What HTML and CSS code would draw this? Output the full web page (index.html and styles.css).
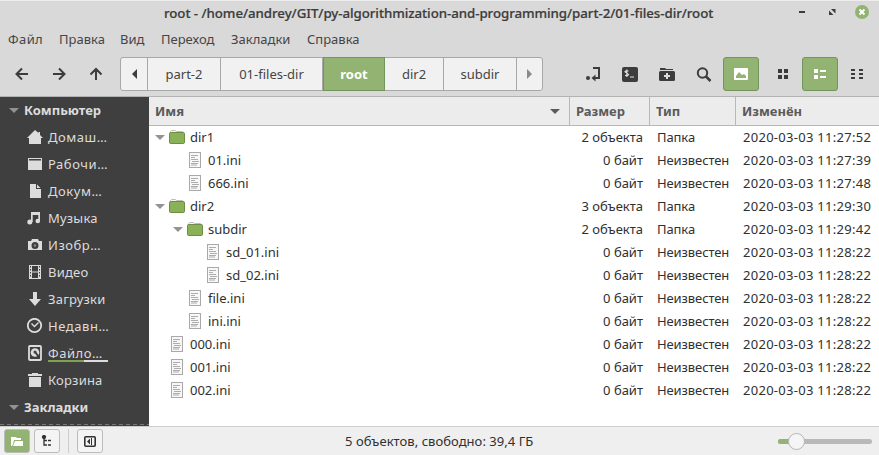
FILE: index.html
```html
<!DOCTYPE html>
<html lang="ru">
<head>
<meta charset="utf-8">
<title>root</title>
<link rel="stylesheet" href="styles.css">
</head>
<body>
<svg width="0" height="0" class="defs">
  <symbol id="folder" viewBox="0 0 16 15"><path d="M1.5 4V1.5L2.5.5h4l1 1h6l1 1V5" fill="#f6f6f6" stroke="#bdbdbd"/><rect x=".5" y="2.5" width="15" height="11" rx="1.200" fill="#8bb158" stroke="#6d8c44"/></symbol>
  <symbol id="file" viewBox="0 0 12 16"><rect x=".5" y=".5" width="11" height="15" fill="#f7f7f7" stroke="#a9a9a9"/><path d="M2 3.500h7M2 5.500h4M2 7.500h7M3 9.500h7M2 11.500h7M2 13h6" stroke="#adadad"/></symbol>
  <symbol id="tri" viewBox="0 0 10 5"><path d="M0 0h10L5 5z" fill="currentColor"/></symbol>
</svg>
<div class="window">
  <header class="titlebar">
    <div class="title">root - /home/andrey/GIT/py-algorithmization-and-programming/part-2/01-files-dir/root</div>
    <svg class="controls" width="75" height="16" viewBox="0 0 75 16"><path d="M2 8h6" stroke="#3c3c3c" stroke-width="2"/><path d="M34 5h4.500v4.500zM32 6.500v4.500h4.500z" fill="#3c3c3c"/><circle cx="65" cy="8" r="7" fill="#92b372"/><path d="M62.500 5.500l5 5m0-5l-5 5" stroke="#fff" stroke-width="1.800"/></svg>
  </header>
  <nav class="menu"><span class="m1">Файл</span><span class="m2">Правка</span><span class="m3">Вид</span><span class="m4">Переход</span><span class="m5">Закладки</span><span class="m6">Справка</span></nav>
  <div class="toolbar">
    <svg class="nav" width="90" height="14" viewBox="0 0 90 14" fill="none" stroke="#3c3c3c" stroke-width="2"><path d="M13 7H2M7 1.500L1.500 7 7 12.500M38 7h11M44 1.500L49.500 7 44 12.500M81 13V2M75.500 7.500L81 2l5.500 5.500"/></svg>
    <div class="path">
      <span class="p1"><svg width="5" height="10"><path d="M5 0v10L0 5z" fill="#3c3c3c"/></svg></span><span class="p2">part-2</span><span class="p3">01-files-dir</span><span class="p4 on">root</span><span class="p5">dir2</span><span class="p6">subdir</span><span class="p7"><svg width="5" height="10"><path d="M0 0v10l5-5z" fill="#8a8a8a"/></svg></span>
    </div>
    <div class="tools">
      <span class="tool"><svg width="16" height="16" fill="none" stroke="#3c3c3c" stroke-width="2"><circle cx="3" cy="12" r="2" fill="#3c3c3c" stroke="none"/><path d="M8 2h6v10H9"/><path d="M10.500 8.500v7L6.500 12z" fill="#3c3c3c" stroke="none"/></svg></span>
      <span class="tool"><svg width="16" height="16"><rect y="1" width="16" height="15" rx="2" fill="#3c3c3c"/><path d="M6.500 5H3.800L3 5.800 6.500 8.500 5.700 9.500H3M4.800 3.500v7.500M8 11h4" fill="none" stroke="#e0e0e0" stroke-width="1.200"/></svg></span>
      <span class="tool"><svg width="16" height="16"><path d="M1 4V2h5l1 1h7v1" fill="#3c3c3c"/><rect y="5" width="16" height="10" rx="1.500" fill="#3c3c3c"/><path d="M8 7v6M5 10h6" stroke="#ddd" stroke-width="2"/></svg></span>
      <span class="tool"><svg width="16" height="16" fill="none" stroke="#3c3c3c"><circle cx="6.500" cy="7" r="4.700" stroke-width="2"/><path d="M10 10.500l4.500 4.500" stroke-width="2.500"/></svg></span>
      <span class="tool on t5"><svg width="16" height="16"><rect x="1" y="2" width="14" height="12" rx="1" fill="#fff"/><path d="M3 12V10l3-4 3 3 2-1 2 2v2z" fill="#92b372"/></svg></span>
      <span class="tool t6"><svg width="16" height="16" fill="#3c3c3c"><path d="M3 3h4v4H3zM9 3h4v4H9zM3 9h4v4H3zM9 9h4v4H9z"/></svg></span>
      <span class="tool on t7"><svg width="16" height="16" fill="#fff"><path d="M2 3h4v4H2zM8 4h6v2H8zM2 9h4v4H2zM8 10h6v2H8z"/></svg></span>
      <span class="tool t8"><svg width="16" height="16" fill="#3c3c3c"><path d="M2 3h4v2H2zM10 3h4v2h-4zM2 7h4v2H2zM10 7h4v2h-4zM2 11h4v2H2zM10 11h4v2h-4z"/></svg></span>
    </div>
  </div>
  <main class="main">
    <aside class="side">
      <div class="group"><svg width="10" height="5"><use href="#tri"/></svg><span>Компьютер</span></div>
      <div class="place cut"><svg width="16" height="16"><path d="M8 1l3.500 3V3H13v3l3 3h-2v6H2V9H0z"/></svg><span>Домаш…</span></div>
      <div class="place cut"><svg width="16" height="16"><path d="M1 2h14v1H1zM1 4.500h14V14H1z"/><path d="M1 2h1v3H1zM14 2h1v3h-1z"/></svg><span>Рабочи…</span></div>
      <div class="place cut"><svg width="16" height="16"><path d="M3 1h6v5h5v9H3zM10 1.500L13.500 5H10z"/></svg><span>Докум…</span></div>
      <div class="place"><svg width="16" height="16"><path d="M4 2h9v9h-1.700V5H5.700v7H4z"/><circle cx="2.800" cy="12" r="2.500"/><circle cx="10.800" cy="11" r="2.300"/></svg><span>Музыка</span></div>
      <div class="place cut"><svg width="16" height="16"><path fill-rule="evenodd" d="M5 2h6l1 2h3v9H1V4h3zM8 5a3.500 3.500 0 100 7 3.500 3.500 0 000-7z"/><circle cx="8" cy="8.500" r="1.200" fill="#8a8a8a"/></svg><span>Изобр…</span></div>
      <div class="place"><svg width="16" height="16"><path fill-rule="evenodd" d="M2 1h12v14H2zM5 2v5.500h6V2zM5 8.500V14h6V8.500z"/><path d="M3.500 2v12M12.500 2v12" stroke="#3f3f3f" stroke-dasharray="1.500 1.500"/></svg><span>Видео</span></div>
      <div class="place"><svg width="16" height="16"><path d="M6 1h4v7h4l-6 7-6-7h4z"/></svg><span>Загрузки</span></div>
      <div class="place cut"><svg width="16" height="16"><circle cx="7.500" cy="7.500" r="6.700" fill="none" stroke="#dcdcdc" stroke-width="1.800"/><path d="M4.500 5.500l3 3 4-4" fill="none" stroke="#dcdcdc" stroke-width="1.400"/></svg><span>Недавн…</span></div>
      <div class="place cut"><svg width="16" height="16"><rect x="2" y="1" width="12" height="14" rx="1" fill="none" stroke="#dcdcdc" stroke-width="1.800"/><circle cx="8" cy="7.500" r="4.300"/><path d="M8 7l4 5" stroke="#3f3f3f" stroke-width="2"/><circle cx="8" cy="7" r="1.500" fill="#3f3f3f"/></svg><span>Файло…</span><i class="usage"></i></div>
      <div class="place"><svg width="16" height="16"><path d="M1 2h4V1h6v1h4v2H1zM2 5h12v10H2z"/></svg><span>Корзина</span></div>
      <div class="group"><svg width="10" height="5"><use href="#tri"/></svg><span>Закладки</span></div>
      <div class="more"></div>
    </aside>
    <section class="list">
      <div class="row head"><span class="name"><b>Имя</b><svg width="10" height="5"><use href="#tri"/></svg></span><span><b>Размер</b></span><span><b>Тип</b></span><span><b>Изменён</b></span></div>
      <div class="row"><span class="name"><svg class="exp" width="10" height="5"><use href="#tri"/></svg><svg class="fo" width="16" height="15"><use href="#folder"/></svg>dir1</span><span class="size">2 объекта</span><span class="type">Папка</span><span class="date">2020-03-03 11:27:52</span></div>
      <div class="row"><span class="name l1"><svg class="fi" width="12" height="16"><use href="#file"/></svg>01.ini</span><span class="size">0 байт</span><span class="type">Неизвестен</span><span class="date">2020-03-03 11:27:39</span></div>
      <div class="row"><span class="name l1"><svg class="fi" width="12" height="16"><use href="#file"/></svg>666.ini</span><span class="size">0 байт</span><span class="type">Неизвестен</span><span class="date">2020-03-03 11:27:48</span></div>
      <div class="row"><span class="name"><svg class="exp" width="10" height="5"><use href="#tri"/></svg><svg class="fo" width="16" height="15"><use href="#folder"/></svg>dir2</span><span class="size">3 объекта</span><span class="type">Папка</span><span class="date">2020-03-03 11:29:30</span></div>
      <div class="row"><span class="name l1"><svg class="exp" width="10" height="5"><use href="#tri"/></svg><svg class="fo" width="16" height="15"><use href="#folder"/></svg>subdir</span><span class="size">2 объекта</span><span class="type">Папка</span><span class="date">2020-03-03 11:29:42</span></div>
      <div class="row"><span class="name l2"><svg class="fi" width="12" height="16"><use href="#file"/></svg>sd_01.ini</span><span class="size">0 байт</span><span class="type">Неизвестен</span><span class="date">2020-03-03 11:28:22</span></div>
      <div class="row"><span class="name l2"><svg class="fi" width="12" height="16"><use href="#file"/></svg>sd_02.ini</span><span class="size">0 байт</span><span class="type">Неизвестен</span><span class="date">2020-03-03 11:28:22</span></div>
      <div class="row"><span class="name l1"><svg class="fi" width="12" height="16"><use href="#file"/></svg>file.ini</span><span class="size">0 байт</span><span class="type">Неизвестен</span><span class="date">2020-03-03 11:28:22</span></div>
      <div class="row"><span class="name l1"><svg class="fi" width="12" height="16"><use href="#file"/></svg>ini.ini</span><span class="size">0 байт</span><span class="type">Неизвестен</span><span class="date">2020-03-03 11:28:22</span></div>
      <div class="row"><span class="name"><svg class="fi" width="12" height="16"><use href="#file"/></svg>000.ini</span><span class="size">0 байт</span><span class="type">Неизвестен</span><span class="date">2020-03-03 11:28:22</span></div>
      <div class="row"><span class="name"><svg class="fi" width="12" height="16"><use href="#file"/></svg>001.ini</span><span class="size">0 байт</span><span class="type">Неизвестен</span><span class="date">2020-03-03 11:28:22</span></div>
      <div class="row"><span class="name"><svg class="fi" width="12" height="16"><use href="#file"/></svg>002.ini</span><span class="size">0 байт</span><span class="type">Неизвестен</span><span class="date">2020-03-03 11:28:22</span></div>
    </section>
  </main>
  <footer class="status">
    <span class="sb on"><svg width="12" height="10" fill="#fff"><path d="M0 1h5l1 1h4v2H3L2 8 1 10H0zM4 5h8v5H2z"/></svg></span>
    <span class="sb"><svg width="12" height="12" fill="none" stroke="#333" stroke-width="1.300"><circle cx="3" cy="2" r="1.500" fill="#333"/><path d="M3 2v8h3M3 5.500h3M7 5.500h3M7 10h3"/></svg></span>
    <i class="sep"></i>
    <span class="sb"><svg width="12" height="11"><rect x=".8" y=".8" width="10.400" height="9.400" rx="1" fill="none" stroke="#333" stroke-width="1.600"/><path d="M6 2.500v6l-3-3zM7 2h1v7H7z" fill="#333"/></svg></span>
    <span class="info">5 объектов, свободно: 39,4 ГБ</span>
    <svg class="slider" width="96" height="20"><rect x="1" y="8" width="94" height="5" rx="2.500" fill="#b9b9b9"/><path d="M3.500 8H20v5H3.500a2.500 2.500 0 010-5z" fill="#92b372"/><circle cx="19.500" cy="10.500" r="8" fill="#f5f5f5" stroke="#b5b5b5"/></svg>
  </footer>
</div>
</body>
</html>
```
FILE: styles.css
```css
* { box-sizing: border-box; }
body { margin: 0; font: 13px/20px "Noto Sans", sans-serif; color: #303030; }
svg { display: block; flex: none; }
.defs { position: absolute; }
.window { width: 879px; height: 455px; display: flex; flex-direction: column; background: #d9d9d9; overflow: hidden; white-space: nowrap; }
.titlebar { height: 28px; border-top: 1px solid #eee; display: flex; align-items: center; padding-left: 164px; color: #3c3c3c; flex: none; }
.title { width: 630px; font-size: 13.3px; font-weight: 500; letter-spacing: -.06px; padding-bottom: 3px; -webkit-text-stroke: .2px #3c3c3c; }
.controls { margin: -5px 0 0 3px; }
.menu { height: 26px; display: flex; align-items: center; padding: 0 0 4px 8px; flex: none; color: #454545; }
.m1 { width: 51px; letter-spacing: .4px; } .m2 { width: 61px; } .m3 { width: 41px; } .m4 { width: 70px; } .m5 { width: 76px; }
.toolbar { height: 43px; display: flex; padding-top: 3px; border-bottom: 1px solid #b3b3b3; flex: none; }
.nav { margin: 10px 15px 0 15px; }
.path { display: flex; height: 34px; border: 1px solid #a8a8a8; border-radius: 3px; background: #f1f1f1; width: 423px; color: #454545; }
.path span { display: flex; align-items: center; justify-content: center; border-right: 1px solid #a8a8a8; }
.path .p1 { width: 27px; } .path .p2 { width: 73px; } .path .p3 { width: 102px; } .path .p5 { width: 59px; } .path .p6 { width: 73px; }
.path .p7 { border: 0; flex: 1; }
.path .p4 { width: 62px; margin: -1px 0; border: 1px solid #73945a; background: #92b372; color: #fff; font-weight: 700; }
.tools { display: flex; margin-left: 31px; }
.tool { width: 37px; height: 34px; display: flex; align-items: center; justify-content: center; }
.tool.on { width: 36px; border: 1px solid #73945a; border-radius: 3px; background: #92b372; }
.tool.t5 { margin-left: 1px; }
.t6 { width: 43px; margin-left: 2px; }
.tool.t7 { margin-left: -2px; }
.main { flex: 1; display: flex; min-height: 0; }
.side { width: 149px; background: #3f3f3f; color: #dcdcdc; display: flex; flex-direction: column; }
.group, .place { height: 27px; flex: none; display: flex; align-items: center; position: relative; }
.group { padding-left: 9px; gap: 5px; font-weight: 700; }
.group svg { color: #929292; }
.group span, .place span { padding-bottom: 2px; }
.place { padding-left: 27px; gap: 5px; fill: #dcdcdc; letter-spacing: .2px; }
.place svg { margin-top: -1px; }
.place.cut { letter-spacing: .55px; }
.usage { position: absolute; left: 48px; top: 20px; width: 60px; height: 2px; background: linear-gradient(90deg, #7da34f 36px, #dcdcdc 36px); }
.more { margin-top: auto; height: 1px; margin-bottom: 1px; background: repeating-linear-gradient(90deg, #777 0 4px, #3f3f3f 4px 7px); }
.list { flex: 1; background: #fff; }
.row { display: grid; grid-template-columns: 421px 80px 86px 1fr; height: 23px; line-height: 23px; }
.head { height: 29px; line-height: 20px; background: #ececec; border-bottom: 1px solid #b8b8b8; color: #5a5a5a; }
.head > span { height: 28px; border-right: 1px solid #b8b8b8; padding: 4px 6px; }
.head > span:last-child { border: 0; }
.name { display: flex; align-items: flex-start; padding-left: 5px; }
.head .name { justify-content: space-between; align-items: center; padding: 0 9px 0 6px; }
.name.l1 { padding-left: 23px; }
.name.l2 { padding-left: 41px; }
.exp { color: #939393; margin: 9px 5px 0 1px; }
.fo { margin: 4px 5px 0 -1px; }
.fi { margin: 3px 7px 0 17px; }
.size { text-align: right; padding-right: 7px; }
.type { padding-left: 7px; letter-spacing: -.1px; }
.date { padding-left: 7px; letter-spacing: .28px; }
.status { height: 29px; flex: none; background: #efefef; border-top: 1px solid #cecece; display: flex; align-items: center; padding-left: 4px; }
.sb { width: 26px; height: 24px; border: 1px solid #bcbcbc; border-radius: 3px; display: flex; align-items: center; justify-content: center; margin-right: 4px; background: #f4f4f4; }
.sb.on { background: #92b372; }
.sep { width: 1px; height: 24px; background: #ccc; margin: 0 8px 0 4px; }
.info { margin-left: 238px; width: 432px; letter-spacing: .04px; }
```
